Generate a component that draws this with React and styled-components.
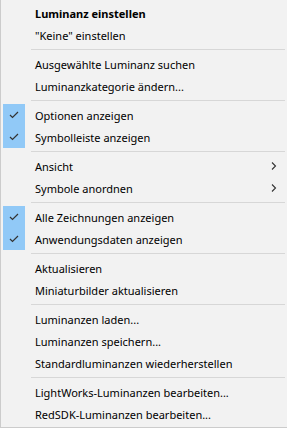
import React from "react";
import styled, { createGlobalStyle } from "styled-components";

const Global = createGlobalStyle`
  html, body { margin: 0; padding: 0; background: #f2f2f2; }
  body { font-family: "Noto Sans", "Liberation Sans", sans-serif; }
`;

const Menu = styled.div`
  width: 287px;
  height: 428px;
  box-sizing: border-box;
  background: #f2f2f2;
  border-left: 1px solid #cccccc;
  border-bottom: 1px solid #cccccc;
  padding: 2px 0 2px 0;
  display: flex;
  flex-direction: column;
  font-size: 11px;
  color: #000;
`;

const Item = styled.div`
  position: relative;
  height: 22px;
  display: flex;
  align-items: center;
  padding-left: 34px;
  font-weight: ${(p) => (p.$bold ? 700 : 400)};
  white-space: nowrap;
`;

const CheckBox = styled.div`
  position: absolute;
  left: 2px;
  top: 0;
  width: 22px;
  height: 22px;
  background: #91c9f7;
  display: flex;
  align-items: center;
  justify-content: center;
`;

const Arrow = styled.svg`
  position: absolute;
  left: 270px;
  top: 7px;
`;

const Sep = styled.div`
  height: 7px;
  display: flex;
  align-items: center;
  padding-left: 30px;
  padding-right: 2px;
  &::after {
    content: "";
    flex: 1;
    height: 1px;
    background: #d7d7d7;
  }
`;

const Check = () => (
  <svg width="10" height="8" viewBox="0 0 10 8">
    <path d="M1 4 L3.5 6.5 L9 1" fill="none" stroke="#333" strokeWidth="1.2" />
  </svg>
);

const Chevron = () => (
  <Arrow width="6" height="8" viewBox="0 0 6 8">
    <path d="M1 0.5 L4.5 4 L1 7.5" fill="none" stroke="#333" strokeWidth="1.1" />
  </Arrow>
);

const groups = [
  [{ t: "Luminanz einstellen", bold: true }, { t: "\"Keine\" einstellen" }],
  [{ t: "Ausgewählte Luminanz suchen" }, { t: "Luminanzkategorie ändern..." }],
  [{ t: "Optionen anzeigen", check: true }, { t: "Symbolleiste anzeigen", check: true }],
  [{ t: "Ansicht", sub: true }, { t: "Symbole anordnen", sub: true }],
  [{ t: "Alle Zeichnungen anzeigen", check: true }, { t: "Anwendungsdaten anzeigen", check: true }],
  [{ t: "Aktualisieren" }, { t: "Miniaturbilder aktualisieren" }],
  [{ t: "Luminanzen laden..." }, { t: "Luminanzen speichern..." }, { t: "Standardluminanzen wiederherstellen" }],
  [{ t: "LightWorks-Luminanzen bearbeiten..." }, { t: "RedSDK-Luminanzen bearbeiten..." }],
];

export default function App() {
  return (
    <>
      <Global />
      <Menu>
        {groups.map((g, gi) => (
          <React.Fragment key={gi}>
            {gi > 0 && <Sep />}
            {g.map((it) => (
              <Item key={it.t} $bold={it.bold}>
                {it.check && (
                  <CheckBox>
                    <Check />
                  </CheckBox>
                )}
                {it.t}
                {it.sub && <Chevron />}
              </Item>
            ))}
          </React.Fragment>
        ))}
      </Menu>
    </>
  );
}
